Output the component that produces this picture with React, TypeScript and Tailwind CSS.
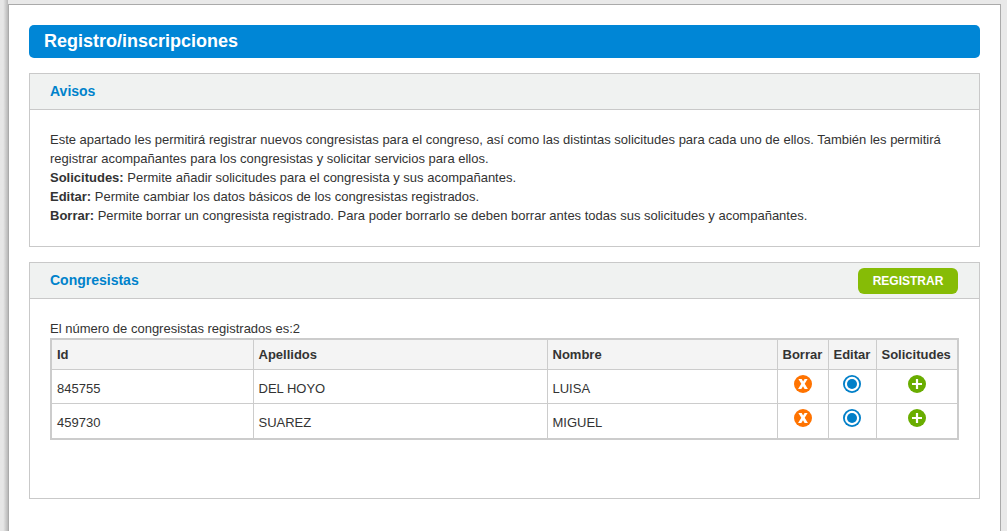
import type { ReactNode } from "react";

const congresistas = [
  { id: 845755, apellidos: "DEL HOYO", nombre: "LUISA" },
  { id: 459730, apellidos: "SUAREZ", nombre: "MIGUEL" },
];

const avisos = [
  {
    titulo: "Solicitudes:",
    texto: "Permite añadir solicitudes para el congresista y sus acompañantes.",
  },
  {
    titulo: "Editar:",
    texto: "Permite cambiar los datos básicos de los congresistas registrados.",
  },
  {
    titulo: "Borrar:",
    texto:
      "Permite borrar un congresista registrado. Para poder borrarlo se deben borrar antes todas sus solicitudes y acompañantes.",
  },
];

function BorrarIcon() {
  return (
    <svg viewBox="0 0 18 18" className="size-[18px]" aria-hidden="true">
      <circle cx="9" cy="9" r="9" fill="#ff7300" />
      <path d="M4.4 4h3.3L9.1 6.6 10.6 4h3L10.7 8.8 13.9 14h-3.3L9 11.2 7.3 14H4.1l3.2-5.2z" fill="#fff" />
    </svg>
  );
}

function EditarIcon() {
  return (
    <svg viewBox="0 0 18 18" className="size-[18px]" aria-hidden="true">
      <circle cx="9" cy="9" r="9" fill="#007fc8" />
      <circle cx="9" cy="9" r="7.2" fill="#fff" />
      <circle cx="9" cy="9" r="5" fill="#007fc8" />
    </svg>
  );
}

function SolicitudesIcon() {
  return (
    <svg viewBox="0 0 18 18" className="size-[18px]" aria-hidden="true">
      <circle cx="9" cy="9" r="9" fill="#69ad00" />
      <path d="M7.9 4h2.2v3.9H14v2.2h-3.9V14H7.9v-3.9H4V7.9h3.9z" fill="#fff" />
    </svg>
  );
}

function Card({ title, action, children }: { title: string; action?: ReactNode; children: ReactNode }) {
  return (
    <section className="border border-[#c9c9c9]">
      <div className="flex h-9 items-center justify-between border-b border-[#c9c9c9] bg-[#f0f2f1] pr-[21px] pl-5">
        <h2 className="pb-0.5 text-sm font-bold text-[#0082cb]">{title}</h2>
        {action}
      </div>
      {children}
    </section>
  );
}

function IconCell({ label, children }: { label: string; children: ReactNode }) {
  return (
    <td className="border border-[#ccc] pt-[5px] text-center align-top">
      <button type="button" aria-label={label} className="mx-auto block cursor-pointer">
        {children}
      </button>
    </td>
  );
}

export default function App() {
  return (
    <div className="flex min-h-screen bg-[#e9e9e9] pr-1.5 font-['Liberation_Sans',Arial,sans-serif] text-[13px] leading-[19px] text-[#333]">
      {/* left edge shadow */}
      <div className="w-2 shrink-0 bg-linear-to-r from-[#e6e6e6] from-40% to-[#b8b8b8]" />

      <div className="flex min-w-0 flex-1 flex-col pt-1">
        <main className="flex flex-1 flex-col gap-[15px] border border-b-0 border-[#aaa] bg-white p-5">
          <h1 className="rounded-[5px] bg-[#0086d6] px-[15px] py-[3px] text-lg leading-[27px] font-bold text-white">
            Registro/inscripciones
          </h1>

          <Card title="Avisos">
            <div className="px-5 pt-5 pb-[21px]">
              <p>
                Este apartado les permitirá registrar nuevos congresistas para el congreso, así como las distintas
                solicitudes para cada uno de ellos. También les permitirá registrar acompañantes para los congresistas y
                solicitar servicios para ellos.
              </p>
              {avisos.map((a) => (
                <p key={a.titulo}>
                  <strong>{a.titulo}</strong> {a.texto}
                </p>
              ))}
            </div>
          </Card>

          <Card
            title="Congresistas"
            action={
              <button
                type="button"
                className="h-[26px] w-[100px] cursor-pointer rounded-md bg-[#86bc06] text-xs font-bold text-white"
              >
                REGISTRAR
              </button>
            }
          >
            <div className="px-5 pt-5 pb-[58px]">
              <p>El número de congresistas registrados es:2</p>
              <table className="w-full table-fixed border-collapse border-2 border-[#ccc]">
                <thead>
                  <tr className="h-[30px] bg-[#f4f4f4] text-left">
                    <th className="w-[202px] border border-[#ccc] px-[5px]">Id</th>
                    <th className="w-[294px] border border-[#ccc] px-[5px]">Apellidos</th>
                    <th className="border border-[#ccc] px-[5px]">Nombre</th>
                    <th className="w-[51px] border border-[#ccc] px-[5px]">Borrar</th>
                    <th className="w-12 border border-[#ccc] px-[5px]">Editar</th>
                    <th className="w-[82px] border border-[#ccc] px-[5px]">Solicitudes</th>
                  </tr>
                </thead>
                <tbody>
                  {congresistas.map((c) => (
                    <tr key={c.id} className="h-[34px] last:h-9">
                      <td className="border border-[#ccc] px-[5px] pt-1">{c.id}</td>
                      <td className="border border-[#ccc] px-[5px] pt-1">{c.apellidos}</td>
                      <td className="border border-[#ccc] px-[5px] pt-1">{c.nombre}</td>
                      <IconCell label="Borrar">
                        <BorrarIcon />
                      </IconCell>
                      <IconCell label="Editar">
                        <EditarIcon />
                      </IconCell>
                      <IconCell label="Solicitudes">
                        <SolicitudesIcon />
                      </IconCell>
                    </tr>
                  ))}
                </tbody>
              </table>
            </div>
          </Card>
        </main>
      </div>
    </div>
  );
}
